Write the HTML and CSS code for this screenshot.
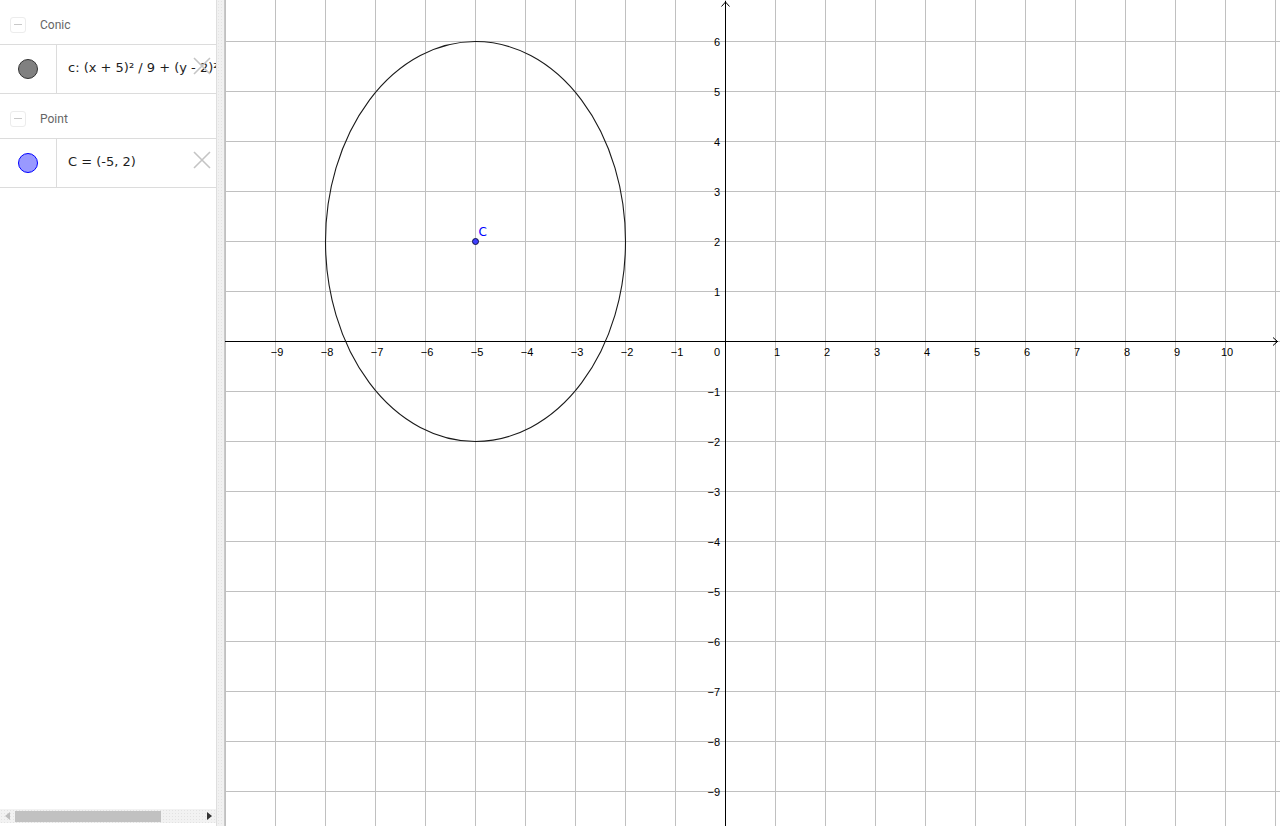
FILE: index.html
```html
<!DOCTYPE html>
<html>
<head>
<meta charset="utf-8">
<link rel="stylesheet" href="styles.css">
</head>
<body>
<div class="app">
  <div class="algebra">
    <div class="group-header">
      <span class="collapse"><span class="collapse-bar"></span></span>
      <span class="group-title">Conic</span>
    </div>
    <div class="item">
      <div class="marker"><span class="dot dot-conic"></span></div>
      <div class="formula">c: (x + 5)² / 9 + (y - 2)² / 16 = 1</div>
      <svg class="delete" width="18" height="18" viewBox="0 0 18 18"><path d="M1 1 L17 17 M17 1 L1 17" stroke="#c4c4c4" stroke-width="1.6" fill="none"/></svg>
    </div>
    <div class="group-header">
      <span class="collapse"><span class="collapse-bar"></span></span>
      <span class="group-title">Point</span>
    </div>
    <div class="item">
      <div class="marker"><span class="dot dot-point"></span></div>
      <div class="formula">C = (-5, 2)</div>
      <svg class="delete" width="18" height="18" viewBox="0 0 18 18"><path d="M1 1 L17 17 M17 1 L1 17" stroke="#c4c4c4" stroke-width="1.6" fill="none"/></svg>
    </div>
    <div class="hscroll">
      <span class="arrow arrow-left"></span>
      <span class="thumb"></span>
      <span class="arrow arrow-right"></span>
    </div>
  </div>
  <div class="divider"></div>
  <div class="graphics">
    <svg class="plot" width="1055" height="826" viewBox="225 0 1055 826">
      <defs>
        <pattern id="grid" x="725" y="341" width="50" height="50" patternUnits="userSpaceOnUse">
          <path d="M0.5 0 V50 M0 0.5 H50" stroke="#c0c0c0" stroke-width="1" fill="none" shape-rendering="crispEdges"/>
        </pattern>
      </defs>
      <rect x="225" y="0" width="1055" height="826" fill="#fff"/>
      <rect x="225" y="0" width="1055" height="826" fill="url(#grid)"/>
      <g class="axes" stroke="#000" stroke-width="1" fill="none">
        <path d="M225 341.5 H1278" shape-rendering="crispEdges"/>
        <path d="M725.5 1 V826" shape-rendering="crispEdges"/>
        <polyline points="721.5,6.5 725.5,2 729.5,6.5"/>
        <polyline points="1273,337.5 1277.5,341.5 1273,345.5"/>
      </g>
      <g class="xlabels" text-anchor="middle">
        <text x="277" y="356">−9</text>
        <text x="327" y="356">−8</text>
        <text x="377" y="356">−7</text>
        <text x="427" y="356">−6</text>
        <text x="477" y="356">−5</text>
        <text x="527" y="356">−4</text>
        <text x="577" y="356">−3</text>
        <text x="627" y="356">−2</text>
        <text x="677" y="356">−1</text>
        <text x="777" y="356">1</text>
        <text x="827" y="356">2</text>
        <text x="877" y="356">3</text>
        <text x="927" y="356">4</text>
        <text x="977" y="356">5</text>
        <text x="1027" y="356">6</text>
        <text x="1077" y="356">7</text>
        <text x="1127" y="356">8</text>
        <text x="1177" y="356">9</text>
        <text x="1227" y="356">10</text>
      </g>
      <g class="ylabels" text-anchor="end">
        <text x="720" y="356">0</text>
        <text x="720" y="45.5">6</text>
        <text x="720" y="95.5">5</text>
        <text x="720" y="145.5">4</text>
        <text x="720" y="195.5">3</text>
        <text x="720" y="245.5">2</text>
        <text x="720" y="295.5">1</text>
        <text x="720" y="395.5">−1</text>
        <text x="720" y="445.5">−2</text>
        <text x="720" y="495.5">−3</text>
        <text x="720" y="545.5">−4</text>
        <text x="720" y="595.5">−5</text>
        <text x="720" y="645.5">−6</text>
        <text x="720" y="695.5">−7</text>
        <text x="720" y="745.5">−8</text>
        <text x="720" y="795.5">−9</text>
      </g>
      <ellipse cx="475.5" cy="241.5" rx="150" ry="200" fill="none" stroke="#1a1a1a" stroke-width="1.1"/>
      <circle cx="475.5" cy="241.5" r="3" fill="#4040ff" stroke="#10104a" stroke-width="1"/>
      <text class="point-label" x="478.5" y="236">C</text>
    </svg>
  </div>
</div>
</body>
</html>
```
FILE: styles.css
```css
html, body {
  margin: 0;
  padding: 0;
  background: #fff;
}
body {
  width: 1280px;
  height: 826px;
  overflow: hidden;
  font-family: "DejaVu Sans", sans-serif;
}
.app {
  display: flex;
  width: 1280px;
  height: 826px;
}
.algebra {
  width: 216px;
  height: 826px;
  display: flex;
  flex-direction: column;
  overflow: hidden;
  position: relative;
  background: #fff;
}
.group-header {
  height: 39px;
  padding-top: 5px;
  border-bottom: 1px solid #dcdcdc;
  display: flex;
  align-items: center;
  flex-shrink: 0;
}
.collapse {
  width: 14px;
  height: 14px;
  margin-left: 10px;
  border: 1px solid #ececec;
  border-radius: 3px;
  display: flex;
  align-items: center;
  justify-content: center;
}
.collapse-bar {
  width: 8px;
  height: 1px;
  background: #c8c8c8;
}
.group-title {
  margin-left: 14px;
  font-family: Roboto, "DejaVu Sans", sans-serif;
  font-size: 12px;
  color: #666;
}
.item {
  height: 48px;
  border-bottom: 1px solid #dcdcdc;
  display: flex;
  position: relative;
  flex-shrink: 0;
}
.marker {
  width: 56px;
  border-right: 1px solid #dcdcdc;
  display: flex;
  align-items: center;
  justify-content: center;
  flex-shrink: 0;
}
.dot {
  width: 18px;
  height: 18px;
  border-radius: 50%;
  box-sizing: content-box;
}
.dot-conic {
  background: #808080;
  border: 1px solid #333;
}
.dot-point {
  background: #9999ff;
  border: 1px solid #0000ff;
}
.formula {
  padding-left: 11px;
  padding-bottom: 3px;
  display: flex;
  align-items: center;
  white-space: nowrap;
  font-size: 13px;
  color: #1e1e1e;
}
.delete {
  position: absolute;
  left: 193px;
  top: 12px;
}
.hscroll {
  margin-top: auto;
  margin-bottom: 3px;
  height: 14px;
  background-color: #f2f2f2;
  background-image: radial-gradient(#e2e2e2 0.6px, transparent 0.8px);
  background-size: 3px 3px;
  position: relative;
  flex-shrink: 0;
}
.thumb {
  position: absolute;
  left: 15px;
  top: 2px;
  width: 146px;
  height: 11px;
  background: #c1c1c1;
}
.arrow {
  position: absolute;
  top: 3px;
  width: 0;
  height: 0;
  border-top: 4px solid transparent;
  border-bottom: 4px solid transparent;
}
.arrow-left {
  left: 5px;
  border-right: 5px solid #bdbdbd;
}
.arrow-right {
  left: 207px;
  border-left: 5px solid #333;
}
.divider {
  width: 7px;
  height: 826px;
  background-color: #f1f1f1;
  background-image: radial-gradient(#e4e4e4 0.6px, transparent 0.8px);
  background-size: 3px 3px;
  border-left: 1px solid #dedede;
  border-right: 1px solid #c8c8c8;
  flex-shrink: 0;
}
.graphics {
  width: 1055px;
  height: 826px;
  overflow: hidden;
  flex-shrink: 0;
}
.plot {
  display: block;
}
.xlabels text, .ylabels text {
  font-family: "Liberation Sans", sans-serif;
  font-size: 11px;
  fill: #000;
}
.point-label {
  font-family: "DejaVu Sans", sans-serif;
  font-size: 12px;
  fill: #0000ff;
}
```
